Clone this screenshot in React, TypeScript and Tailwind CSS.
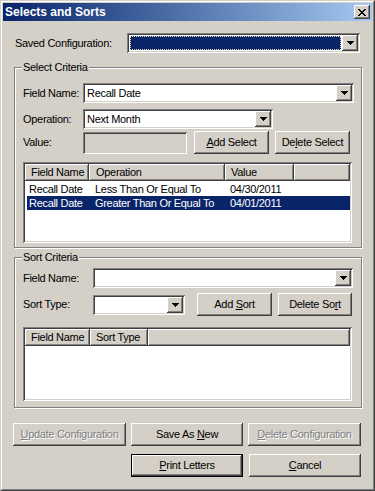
import React from 'react';

// classic 3D bevels
const raised =
  'shadow-[inset_-1px_-1px_#404040,inset_1px_1px_#ffffff,inset_-2px_-2px_#808080,inset_2px_2px_#d4d0c8]';
const sunken =
  'shadow-[inset_1px_1px_#808080,inset_-1px_-1px_#ffffff,inset_2px_2px_#404040,inset_-2px_-2px_#d4d0c8]';
const defaultBtn =
  'shadow-[inset_0_0_0_1px_#000000,inset_-2px_-2px_#404040,inset_2px_2px_#ffffff,inset_-3px_-3px_#808080]';

const Arrow = () => (
  <svg width="7" height="4" viewBox="0 0 7 4" shapeRendering="crispEdges">
    <rect x="0" y="0" width="7" height="1" fill="#000" />
    <rect x="1" y="1" width="5" height="1" fill="#000" />
    <rect x="2" y="2" width="3" height="1" fill="#000" />
    <rect x="3" y="3" width="1" height="1" fill="#000" />
  </svg>
);

const CloseGlyph = () => {
  const rows = ['11000011', '01100110', '00111100', '00011000', '00111100', '01100110', '11000011'];
  return (
    <svg width="8" height="7" viewBox="0 0 8 7" shapeRendering="crispEdges">
      {rows.map((r, y) =>
        r.split('').map((c, x) => (c === '1' ? <rect key={`${x}-${y}`} x={x} y={y} width="1" height="1" fill="#000" /> : null))
      )}
    </svg>
  );
};

const DropButton = () => (
  <div className={`w-[16px] h-full flex items-center justify-center bg-[#d4d0c8] ${raised}`}>
    <Arrow />
  </div>
);

const Combo: React.FC<{ className: string; value?: string; focused?: boolean }> = ({ className, value, focused }) => (
  <div className={`h-[20px] bg-white p-[2px] flex ${sunken} ${className}`}>
    {focused ? (
      <div className="flex-1 m-[1px] bg-[#0a246a] border border-dotted border-[#e6deb0]" />
    ) : (
      <div className="flex-1 px-[2px] flex items-center whitespace-nowrap overflow-hidden">{value}</div>
    )}
    <DropButton />
  </div>
);

const Button: React.FC<{ className: string; children: React.ReactNode; disabled?: boolean; isDefault?: boolean }> = ({
  className,
  children,
  disabled,
  isDefault,
}) => (
  <div
    className={`h-[23px] flex items-center justify-center bg-[#d4d0c8] whitespace-nowrap ${isDefault ? defaultBtn : raised} ${
      disabled ? 'text-[#808080] [text-shadow:1px_1px_0_#ffffff]' : 'text-black'
    } ${className}`}
  >
    <span>{children}</span>
  </div>
);

const HeaderCell: React.FC<{ className: string; children?: React.ReactNode }> = ({ className, children }) => (
  <div className={`h-[17px] flex items-center bg-[#d4d0c8] whitespace-nowrap ${raised} ${className}`}>{children}</div>
);

const Group: React.FC<{ title: string; className: string; children: React.ReactNode }> = ({ title, className, children }) => (
  <div
    className={`relative ml-[11px] w-[348px] border border-[#808080] shadow-[inset_1px_1px_#ffffff,1px_1px_#ffffff] ${className}`}
  >
    <span className="absolute left-[7px] -top-[7px] px-[1px] bg-[#d4d0c8] leading-[13px]">{title}</span>
    {children}
  </div>
);

export default function App() {
  return (
    <div className="w-[375px] h-[491px] bg-[#d4d0c8] font-['Liberation_Sans',Arial,sans-serif] text-[11px] tracking-[-0.3px] text-black select-none">
      <div className="w-full h-full border border-t-[#d4d0c8] border-l-[#d4d0c8] border-r-[#404040] border-b-[#404040]">
        <div className="w-full h-full border border-t-white border-l-white border-r-[#808080] border-b-[#808080] p-[1px] flex flex-col">
          {/* title bar */}
          <div className="h-[18px] flex items-center bg-gradient-to-r from-[#0a246a] to-[#a6caf0] pl-[2px] pr-[2px]">
            <span className="flex-1 text-white font-bold text-[12px] tracking-normal">Selects and Sorts</span>
            <div className={`w-[16px] h-[14px] bg-[#d4d0c8] flex items-center justify-center ${raised}`}>
              <CloseGlyph />
            </div>
          </div>

          {/* saved configuration */}
          <div className="mt-[12px] h-[20px] flex items-center pl-[12px]">
            <span className="w-[112px]">Saved Configuration:</span>
            <Combo className="w-[233px]" focused />
          </div>

          {/* select criteria */}
          <Group title="Select Criteria" className="mt-[14px] h-[181px] pl-[8px] pt-[15px]">
            <div className="h-[20px] flex items-center">
              <span className="w-[60px]">Field Name:</span>
              <Combo className="w-[271px]" value="Recall Date" />
            </div>
            <div className="mt-[6px] h-[20px] flex items-center">
              <span className="w-[60px]">Operation:</span>
              <Combo className="w-[190px]" value="Next Month" />
            </div>
            <div className="mt-[2px] h-[23px] flex items-center">
              <span className="w-[60px] self-start mt-[3px]">Value:</span>
              <div className={`w-[104px] h-[22px] bg-[#d4d0c8] ${sunken}`} />
              <Button className="ml-[7px] w-[75px]">
                <u>A</u>dd Select
              </Button>
              <Button className="ml-[6px] w-[75px]">
                De<u>l</u>ete Select
              </Button>
            </div>
            <div className={`mt-[8px] w-[329px] h-[81px] bg-white p-[2px] flex flex-col ${sunken}`}>
              <div className="flex">
                <HeaderCell className="w-[64px] pl-[6px]">Field Name</HeaderCell>
                <HeaderCell className="w-[136px] pl-[7px]">Operation</HeaderCell>
                <HeaderCell className="w-[69px] pl-[6px]">Value</HeaderCell>
                <HeaderCell className="flex-1" />
              </div>
              <div className="mt-[1px] h-[14px] flex items-center ml-[2px]">
                <span className="w-[68px] pl-[2px]">Recall Date</span>
                <span className="w-[135px]">Less Than Or Equal To</span>
                <span>04/30/2011</span>
              </div>
              <div className="h-[14px] flex items-center ml-[2px] bg-[#0a246a] text-white">
                <span className="w-[68px] pl-[2px]">Recall Date</span>
                <span className="w-[135px]">Greater Than Or Equal To</span>
                <span>04/01/2011</span>
              </div>
            </div>
          </Group>

          {/* sort criteria */}
          <Group title="Sort Criteria" className="mt-[9px] h-[151px] pl-[8px] pt-[10px]">
            <div className="h-[20px] flex items-center">
              <span className="w-[70px]">Field Name:</span>
              <Combo className="w-[260px]" value="" />
            </div>
            <div className="mt-[5px] h-[23px] flex items-center">
              <span className="w-[70px]">Sort Type:</span>
              <Combo className="w-[92px]" value="" />
              <Button className="ml-[12px] w-[75px]">
                Add <u>S</u>ort
              </Button>
              <Button className="ml-[6px] w-[74px]">
                Delete So<u>r</u>t
              </Button>
            </div>
            <div className={`mt-[11px] w-[329px] h-[74px] bg-white p-[2px] flex flex-col ${sunken}`}>
              <div className="flex">
                <HeaderCell className="w-[65px] pl-[6px]">Field Name</HeaderCell>
                <HeaderCell className="w-[58px] pl-[6px]">Sort Type</HeaderCell>
                <HeaderCell className="flex-1" />
              </div>
            </div>
          </Group>

          {/* bottom buttons */}
          <div className="mt-[15px] flex pl-[10px]">
            <Button className="w-[113px]" disabled>
              <u>U</u>pdate Configuration
            </Button>
            <Button className="ml-[5px] w-[112px]">
              Save As <u>N</u>ew
            </Button>
            <Button className="ml-[5px] w-[113px]" disabled>
              <u>D</u>elete Configuration
            </Button>
          </div>
          <div className="mt-[8px] flex pl-[128px]">
            <Button className="w-[112px]" isDefault>
              <u>P</u>rint Letters
            </Button>
            <Button className="ml-[6px] w-[112px]">
              <u>C</u>ancel
            </Button>
          </div>
        </div>
      </div>
    </div>
  );
}
